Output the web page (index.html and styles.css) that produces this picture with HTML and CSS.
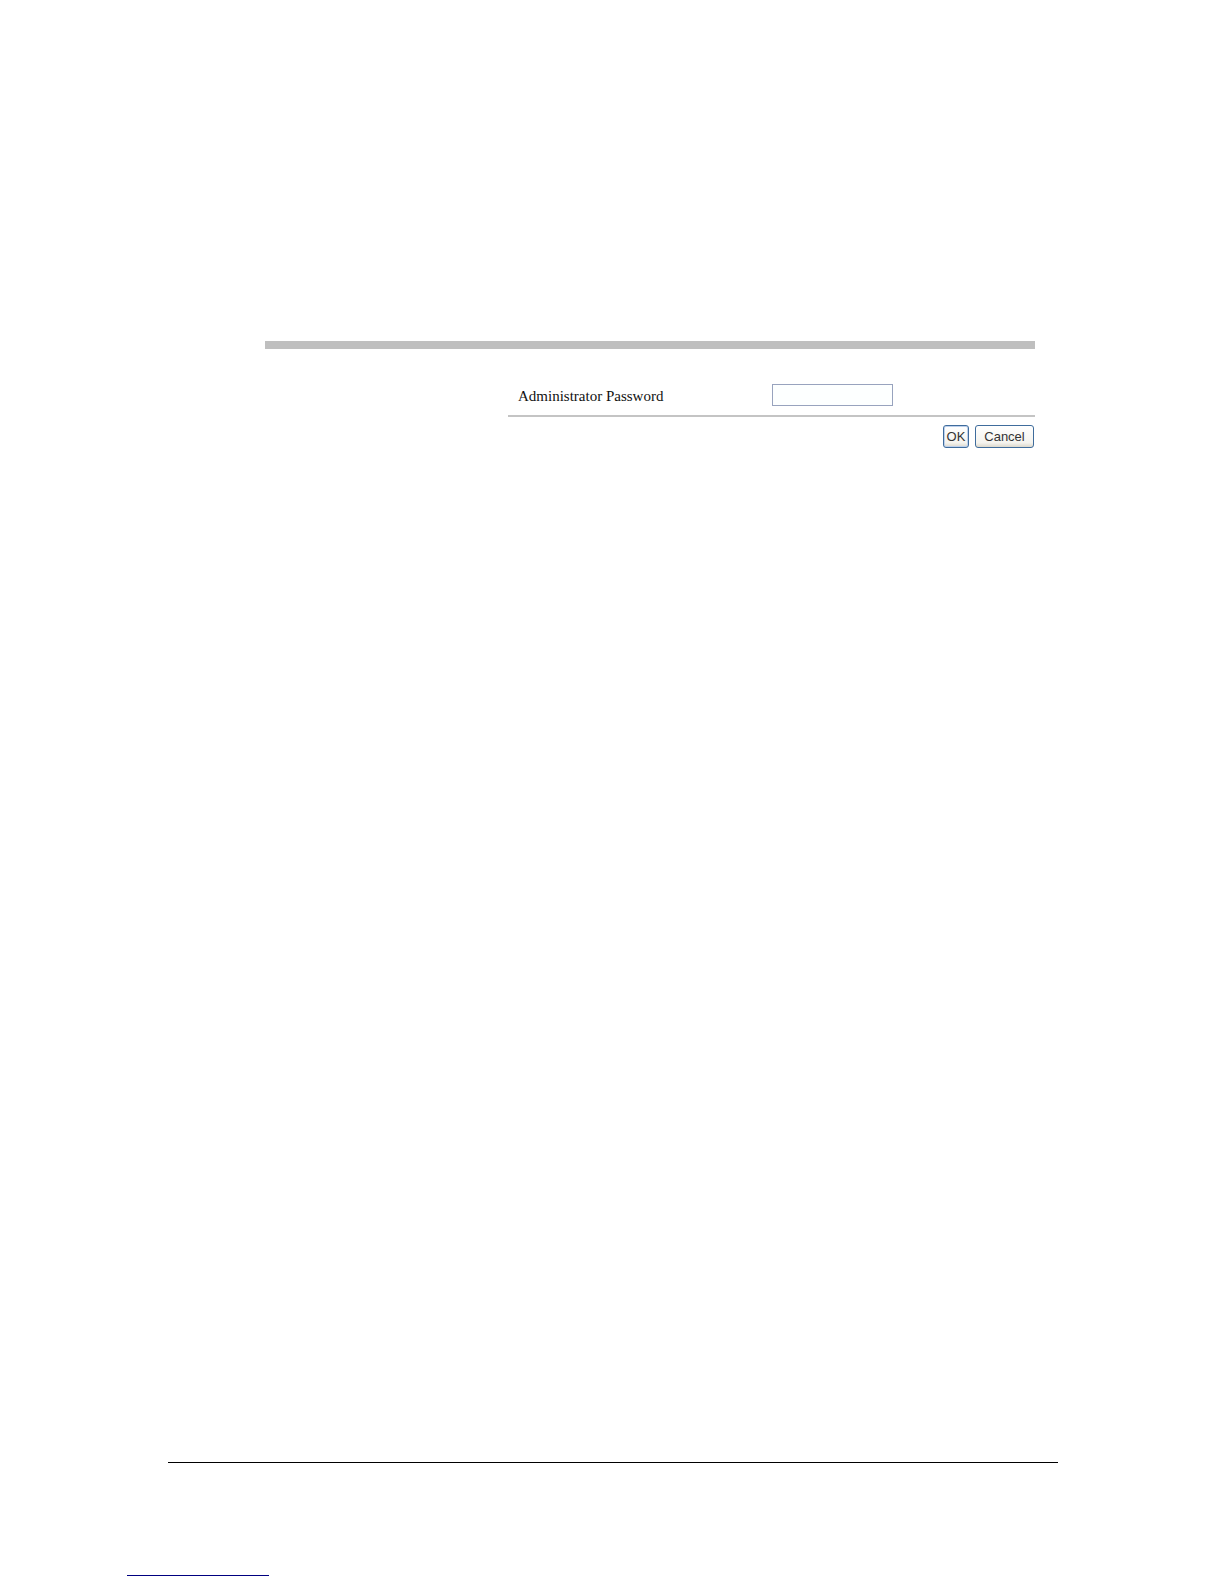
FILE: index.html
```html
<!DOCTYPE html>
<html lang="en">

<head>
    <meta charset="UTF-8">
    <meta name="viewport" content="width=device-width, initial-scale=1.0">
    <title>Administrator Password</title>

    <link rel="stylesheet" href="styles.css">
</head>

<body>
    <main>
        <form class="login-form">
            <div class="form-row">
                <label for="adminPassword">Administrator Password</label>
                <input type="password" id="adminPassword" name="adminPassword">
            </div>

            <div class="form-buttons">
                <button type="submit" class="ok-button">OK</button>
                <button type="button" class="cancel-button">Cancel</button>
            </div>
        </form>
    </main>

    <footer>
        <hr class="footer-line">
        <hr class="footnote-line">
    </footer>
</body>

</html>
```

FILE: styles.css
```css
body {
    display: flex;
    flex-direction: column;
    justify-content: space-between;
    min-height: 100vh;
    margin: 0;
    background-color: #fff;
    color: #111;
    font-family: "Liberation Serif", "Times New Roman", serif;
    font-size: 15px;
}

main {
    margin: 341px 189px 0 265px;
    border-top: 8px solid #bfbfbf;
    /* Gray bar above the form */
}

.login-form {
    margin: 35px 0 0 243px;
}

.form-row {
    display: grid;
    grid-template-columns: 264px 1fr;
    align-items: center;
    padding-bottom: 9px;
    border-bottom: 2px solid #c4c4c4;
}

.form-row label {
    padding: 2px 0 0 10px;
    line-height: 20px;
}

.form-row input {
    box-sizing: border-box;
    width: 121px;
    height: 22px;
    border: 1px solid #98a3be;
    background-color: #fdffff;
}

.form-buttons {
    display: flex;
    justify-content: flex-end;
    gap: 6px;
    padding: 8px 1px 0 0;
}

button {
    height: 23px;
    padding: 0;
    border: 1px solid #3f6c9c;
    border-radius: 3px;
    background: linear-gradient(#fff, #f4f3ee 80%, #dcd8cc);
    color: #333;
    font-family: "Liberation Sans", Arial, sans-serif;
    font-size: 13px;
}

.ok-button {
    width: 26px;
    /* Default button has a blue inner edge */
    box-shadow: inset 0 0 0 1px #bdd0ec;
}

.cancel-button {
    width: 59px;
}

hr {
    margin: 0;
    border: none;
}

.footer-line {
    margin: 0 166px 112px 168px;
    border-top: 1px solid #000;
}

.footnote-line {
    width: 142px;
    margin: 0 0 8px 127px;
    border-top: 1px solid #000080;
}
```
